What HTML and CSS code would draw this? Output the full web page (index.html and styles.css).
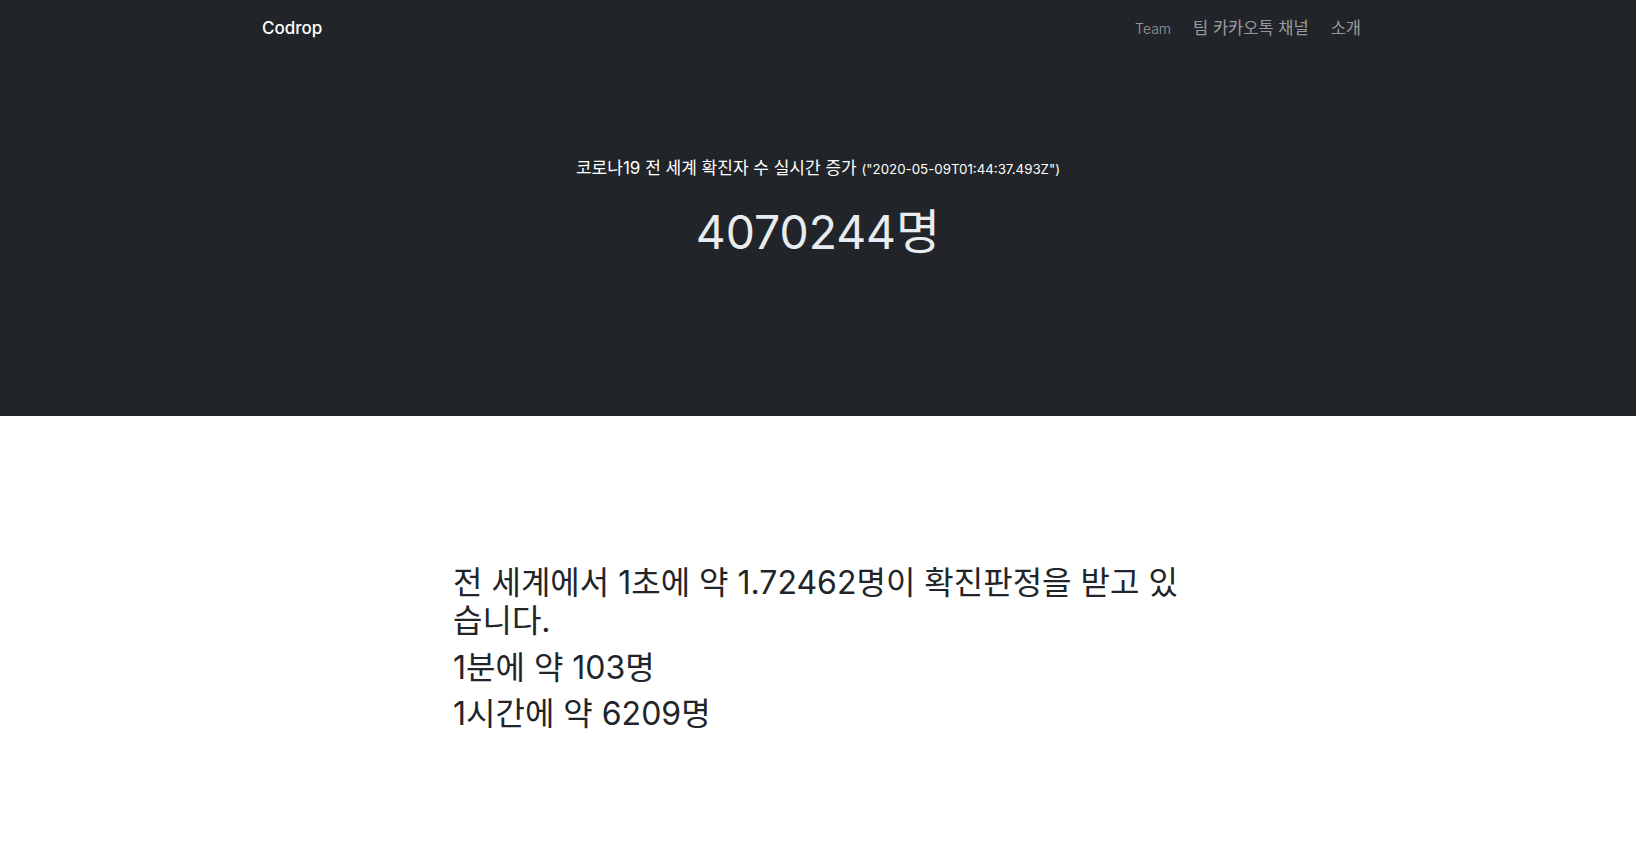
FILE: index.html
```html
<!DOCTYPE html>
<html lang="ko">
<head>
<meta charset="utf-8">
<title>Codrop</title>
<link rel="stylesheet" href="styles.css">
</head>
<body>
<header class="top">
  <nav class="navbar">
    <div class="container nav-inner">
      <a class="brand" href="#">Codrop</a>
      <ul class="nav-links">
        <li><a class="nav-link nav-team" href="#">Team</a></li>
        <li><a class="nav-link" href="#">팀 카카오톡 채널</a></li>
        <li><a class="nav-link" href="#">소개</a></li>
      </ul>
    </div>
  </nav>
  <section class="hero">
    <p class="hero-title">코로나19 전 세계 확진자 수 실시간 증가 <span class="stamp">("2020-05-09T01:44:37.493Z")</span></p>
    <h1 class="hero-count"><span class="count-num">4070244</span>명</h1>
  </section>
</header>
<main class="stats">
  <div class="stats-col">
    <h2 class="stat">전 세계에서 1초에 약 1.72462명이 확진판정을 받고 있습니다.</h2>
    <h2 class="stat">1분에 약 103명</h2>
    <h2 class="stat">1시간에 약 6209명</h2>
  </div>
</main>
</body>
</html>
```

FILE: styles.css
```css
* { box-sizing: border-box; }
html, body { margin: 0; padding: 0; }
body {
  font-family: "Inter", "Noto Sans CJK KR", sans-serif;
  color: #212529;
  background: #fff;
}
.top { background: #212529; }
.container { width: 1110px; margin: 0 auto; }
.navbar { height: 56px; }
.nav-inner {
  display: flex;
  align-items: center;
  justify-content: space-between;
  height: 56px;
}
.brand {
  color: #fff;
  text-decoration: none;
  font-size: 17px;
  font-weight: 500;
  margin-left: -1px;
}
.nav-links {
  display: flex;
  align-items: baseline;
  list-style: none;
  margin: 0 12px 0 0;
  padding: 0;
  transform: translateY(-1px);
}
.nav-link {
  display: block;
  color: rgba(255,255,255,.55);
  text-decoration: none;
  font-size: 16.5px;
  padding: 0 11px;
}
.nav-links li:last-child .nav-link { padding-right: 0; }
.nav-team { font-size: 14px; font-weight: 300; }
.hero {
  padding: 100px 0 155px;
  text-align: center;
}
.hero-title {
  margin: 0;
  color: #fff;
  font-size: 17px;
  line-height: 24px;
}
.stamp { font-size: 13.3px; line-height: 1; }
.hero-count {
  margin: 23px 0 0;
  color: #e9ecef;
  font-size: 48px;
  font-weight: 400;
  line-height: 58px;
}
.count-num { font-size: 46.3px; line-height: 1; }
.stats { padding: 148px 0 120px; }
.stats-col { width: 730px; margin-left: 453px; }
.stat {
  margin: 0 0 8px;
  font-size: 32px;
  font-weight: 400;
  line-height: 38.4px;
}
```
